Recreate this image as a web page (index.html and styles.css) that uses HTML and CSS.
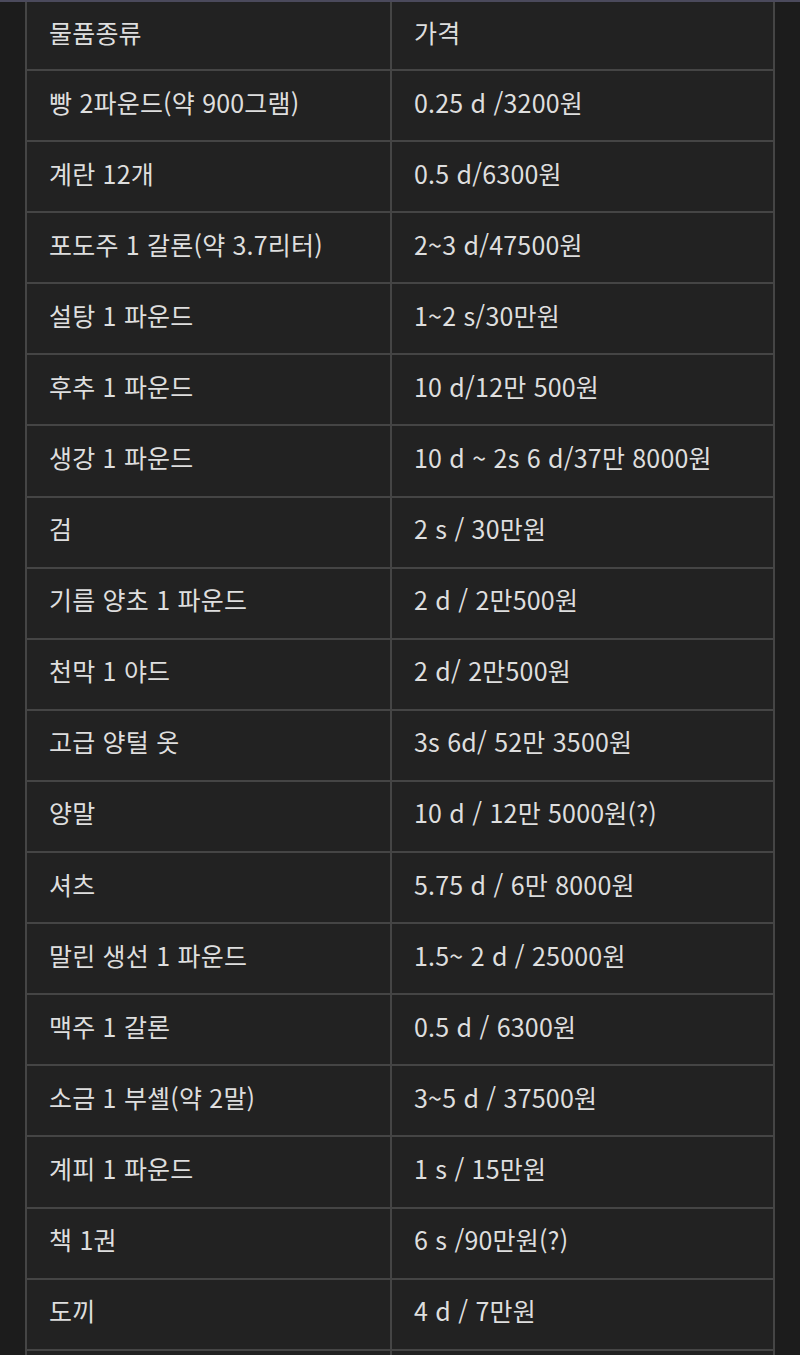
FILE: index.html
```html
<!DOCTYPE html>
<html lang="ko">
<head>
<meta charset="utf-8">
<title>물품 가격표</title>
<link rel="stylesheet" href="styles.css">
</head>
<body>
<div class="strip"></div>
<div class="table">
  <div class="cell head">물품종류</div><div class="cell head">가격</div>
  <div class="cell">빵 2파운드(약 900그램)</div><div class="cell">0.25 d /3200원</div>
  <div class="cell">계란 12개</div><div class="cell">0.5 d/6300원</div>
  <div class="cell">포도주 1 갈론(약 3.7리터)</div><div class="cell">2~3 d/47500원</div>
  <div class="cell">설탕 1 파운드</div><div class="cell">1~2 s/30만원</div>
  <div class="cell">후추 1 파운드</div><div class="cell">10 d/12만 500원</div>
  <div class="cell">생강 1 파운드</div><div class="cell">10 d ~ 2s 6 d/37만 8000원</div>
  <div class="cell">검</div><div class="cell">2 s / 30만원</div>
  <div class="cell">기름 양초 1 파운드</div><div class="cell">2 d / 2만500원</div>
  <div class="cell">천막 1 야드</div><div class="cell">2 d/ 2만500원</div>
  <div class="cell">고급 양털 옷</div><div class="cell">3s 6d/ 52만 3500원</div>
  <div class="cell">양말</div><div class="cell">10 d / 12만 5000원(?)</div>
  <div class="cell">셔츠</div><div class="cell">5.75 d / 6만 8000원</div>
  <div class="cell">말린 생선 1 파운드</div><div class="cell">1.5~ 2 d / 25000원</div>
  <div class="cell">맥주 1 갈론</div><div class="cell">0.5 d / 6300원</div>
  <div class="cell">소금 1 부셸(약 2말)</div><div class="cell">3~5 d / 37500원</div>
  <div class="cell">계피 1 파운드</div><div class="cell">1 s / 15만원</div>
  <div class="cell">책 1권</div><div class="cell">6 s /90만원(?)</div>
  <div class="cell">도끼</div><div class="cell">4 d / 7만원</div>
  <div class="cell"></div><div class="cell"></div>
</div>
</body>
</html>
```
FILE: styles.css
```css
html, body {
  margin: 0;
  padding: 0;
  background: #1c1c1c;
  height: 1355px;
  overflow: hidden;
}
.strip {
  height: 2px;
  background: #4b4a5c;
}
.table {
  margin-left: 25px;
  width: 750px;
  box-sizing: border-box;
  display: grid;
  grid-template-columns: 363px 381px;
  grid-auto-rows: 69.1px;
  grid-template-rows: 67px;
  gap: 2px;
  padding: 0 2px 2px 2px;
  background: #454545;
  font-family: "Noto Sans CJK KR", "Noto Sans", sans-serif;
  font-size: 25px;
  letter-spacing: 0.2px;
  color: #dedede;
}
.cell {
  background: #222222;
  display: flex;
  align-items: center;
  padding-left: 22px;
  padding-bottom: 8px;
  box-sizing: border-box;
  white-space: nowrap;
}
```
